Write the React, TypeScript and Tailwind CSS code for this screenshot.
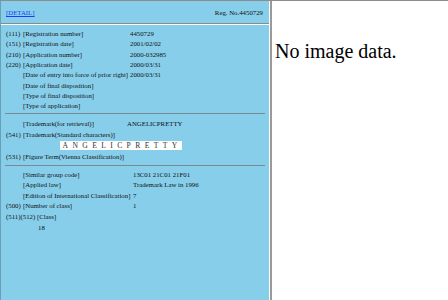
const serif = "font-['Liberation_Serif','Times_New_Roman',serif]";

type Row = { no?: string; label: string; value?: string };

const basic: Row[] = [
  { no: "(111)", label: "[Registration number]", value: "4450729" },
  { no: "(151)", label: "[Registration date]", value: "2001/02/02" },
  { no: "(210)", label: "[Application number]", value: "2000-032985" },
  { no: "(220)", label: "[Application date]", value: "2000/03/31" },
  { label: "[Date of entry into force of prior right]", value: "2000/03/31" },
  { label: "[Date of final disposition]" },
  { label: "[Type of final disposition]" },
  { label: "[Type of application]" },
];

const classes: Row[] = [
  { label: "[Similar group code]", value: "13C01 21C01 21F01" },
  { label: "[Applied law]", value: "Trademark Law in 1996" },
  { label: "[Edition of International Classification]", value: "7" },
  { no: "(500)", label: "[Number of class]", value: "1" },
];

function InfoRow({ row, cols, h }: { row: Row; cols: string; h: string }) {
  return (
    <div className={`grid ${cols} ${h} items-center whitespace-nowrap`}>
      <span>{row.no ?? ""}</span>
      <span>{row.label}</span>
      <span>{row.value ?? ""}</span>
    </div>
  );
}

function Rule() {
  return <div className="mx-[4px] h-px bg-[#7b8a92]" />;
}

export default function App() {
  return (
    <div className={`flex h-[300px] w-[448px] border-t border-[#8c8c8c] ${serif}`}>
      <div className="w-[269px] border-l border-[#6b9fb5] bg-[#87ceeb] text-[6.8px] text-[#111]">
        <div className="flex h-[22px] items-center justify-between px-[5px] pt-[3px]">
          <a className="text-[#1a3cff] underline">[DETAIL]</a>
          <span className="pr-[1px]">Reg. No.4450729</span>
        </div>
        <div className="h-[1px] bg-[#8a8a8a]" />
        <div className="h-[1px] bg-white" />

        <div className="px-[5px] pt-[4px]">
          {basic.map((r) => (
            <InfoRow key={r.label} row={r} cols="grid-cols-[17px_107px_1fr]" h="h-[10.3px]" />
          ))}
        </div>
        <div className="h-[2px]" />
        <Rule />

        <div className="px-[5px] pt-[4px]">
          <InfoRow
            row={{ label: "[Trademark(for retrieval)]", value: "ANGELICPRETTY" }}
            cols="grid-cols-[17px_104px_1fr]"
            h="h-[11px]"
          />
          <InfoRow
            row={{ no: "(541)", label: "[Trademark(Standard characters)]" }}
            cols="grid-cols-[17px_104px_1fr]"
            h="h-[11px]"
          />
          <div className="flex h-[11px] items-center pl-[54px]">
            <span className="bg-white pl-[2.5px] text-[7.6px] leading-[9px] tracking-[4.4px] text-[#333]">
              ANGELICPRETTY
            </span>
          </div>
          <div className="flex h-[11px] items-center whitespace-nowrap">
            <span className="w-[17px]">(531)</span>
            <span>[Figure Term(Vienna Classification)]</span>
          </div>
        </div>
        <div className="h-[3px]" />
        <Rule />

        <div className="px-[5px] pt-[3px]">
          {classes.map((r) => (
            <InfoRow key={r.label} row={r} cols="grid-cols-[17px_110px_1fr]" h="h-[10.6px]" />
          ))}
          <div className="flex h-[10.6px] items-center whitespace-nowrap">(511)(512) [Class]</div>
          <div className="flex h-[10.6px] items-center pl-[32px]">18</div>
        </div>
      </div>
      <div className="w-px bg-white" />
      <div className="w-[2px] bg-[#9a9a9a]" />
      <div className="flex-1 bg-white pl-[3px] pt-[39px]">
        <p className="text-[20px] leading-[22px] text-black">No image data.</p>
      </div>
    </div>
  );
}
